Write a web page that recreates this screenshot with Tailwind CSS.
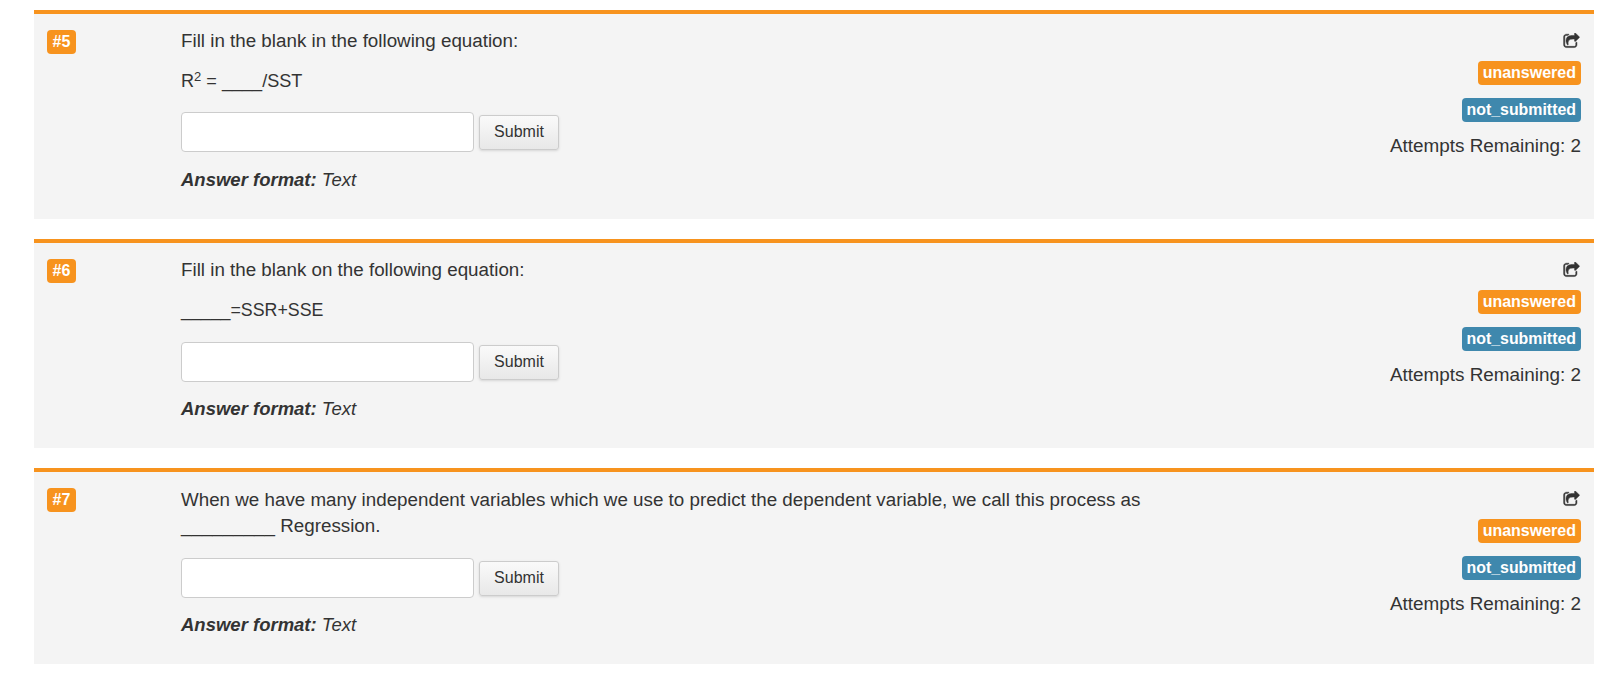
<!DOCTYPE html>
<html lang="en">
<head>
<meta charset="UTF-8">
<title>Questions</title>
<script src="https://cdn.jsdelivr.net/npm/@tailwindcss/browser@4"></script>
</head>
<body class="bg-white font-['Liberation_Sans',Arial,sans-serif] text-[18.8px] text-[#333]">
<div class="pl-[34px] pr-[22px] pt-[10px]">

  <!-- question 5 -->
  <div class="flex h-[209px] border-t-4 border-[#f7931e] bg-[#f4f4f4] mb-[20px]">
    <div class="flex w-[147px] shrink-0 items-start pl-[13px] pt-[16px]">
      <span class="flex h-[24px] w-[29px] items-center justify-center rounded-[4px] bg-[#f7931e] text-[16px] font-bold text-white">#5</span>
    </div>
    <div class="flex-1 pt-[15px]">
      <p class="leading-[24px]">Fill in the blank in the following equation:</p>
      <p class="mt-[16px] text-[18.1px] leading-[24px]">R<sup class="text-[13px] leading-none">2</sup> = ____/SST</p>
      <div class="mt-[19px] flex items-center gap-[5px]">
        <input type="text" class="h-[40px] w-[293px] rounded-[4px] border border-[#ccc] bg-white">
        <button class="h-[35px] w-[80px] rounded-[3px] border border-[#ccc] bg-gradient-to-b from-[#fafafa] to-[#e8e8e8] text-[16px] text-[#333] shadow-sm">Submit</button>
      </div>
      <p class="mt-[16px] text-[18.5px] italic leading-[24px]"><b>Answer format:</b> Text</p>
    </div>
    <div class="flex flex-col items-end pr-[13px] pt-[19px]">
      <svg class="mr-[1px] h-[17px] w-[17px] fill-[#333] stroke-[#333] stroke-[50]" viewBox="0 0 1792 1792"><path d="M1472 989v259q0 119-84.5 203.5t-203.5 84.5h-832q-119 0-203.5-84.5t-84.5-203.5v-832q0-119 84.5-203.5t203.5-84.5h255q13 0 22.5 9.5t9.5 22.5q0 27-26 32-77 26-133 60-10 4-16 4h-112q-66 0-113 47t-47 113v832q0 66 47 113t113 47h832q66 0 113-47t47-113v-214q0-19 18-29 28-13 54-37 16-16 35-8 21 9 21 29zm237-496l-384 384q-18 19-45 19-12 0-25-5-39-17-39-59v-192h-160q-323 0-438 131-119 137-74 473 3 23-20 34-8 2-12 2-16 0-26-13-10-14-21-31t-39.5-68.5-49.5-99.5-38.5-114-17.5-122q0-49 3.5-91t14-90 28-88 47-81.5 68.5-74 94.5-61.5 124.5-48.5 159.5-30.5 196.5-11h160v-192q0-42 39-59 13-5 25-5 26 0 45 19l384 384q19 19 19 45t-19 45z"/></svg>
      <span class="mt-[11px] flex h-[24px] items-center rounded-[4px] bg-[#f7931e] px-[5px] text-[16px] font-bold text-white">unanswered</span>
      <span class="mt-[13px] flex h-[24px] items-center rounded-[4px] bg-[#3f88ad] px-[5px] text-[15.9px] font-bold text-white">not_submitted</span>
      <p class="mt-[12px] text-[18.9px] leading-[24px]">Attempts Remaining: 2</p>
    </div>
  </div>

  <!-- question 6 -->
  <div class="flex h-[209px] border-t-4 border-[#f7931e] bg-[#f4f4f4] mb-[20px]">
    <div class="flex w-[147px] shrink-0 items-start pl-[13px] pt-[16px]">
      <span class="flex h-[24px] w-[29px] items-center justify-center rounded-[4px] bg-[#f7931e] text-[16px] font-bold text-white">#6</span>
    </div>
    <div class="flex-1 pt-[15px]">
      <p class="leading-[24px]">Fill in the blank on the following equation:</p>
      <p class="mt-[16px] text-[17.8px] leading-[24px]">_____=SSR+SSE</p>
      <div class="mt-[20px] flex items-center gap-[5px]">
        <input type="text" class="h-[40px] w-[293px] rounded-[4px] border border-[#ccc] bg-white">
        <button class="h-[35px] w-[80px] rounded-[3px] border border-[#ccc] bg-gradient-to-b from-[#fafafa] to-[#e8e8e8] text-[16px] text-[#333] shadow-sm">Submit</button>
      </div>
      <p class="mt-[15px] text-[18.5px] italic leading-[24px]"><b>Answer format:</b> Text</p>
    </div>
    <div class="flex flex-col items-end pr-[13px] pt-[19px]">
      <svg class="mr-[1px] h-[17px] w-[17px] fill-[#333] stroke-[#333] stroke-[50]" viewBox="0 0 1792 1792"><path d="M1472 989v259q0 119-84.5 203.5t-203.5 84.5h-832q-119 0-203.5-84.5t-84.5-203.5v-832q0-119 84.5-203.5t203.5-84.5h255q13 0 22.5 9.5t9.5 22.5q0 27-26 32-77 26-133 60-10 4-16 4h-112q-66 0-113 47t-47 113v832q0 66 47 113t113 47h832q66 0 113-47t47-113v-214q0-19 18-29 28-13 54-37 16-16 35-8 21 9 21 29zm237-496l-384 384q-18 19-45 19-12 0-25-5-39-17-39-59v-192h-160q-323 0-438 131-119 137-74 473 3 23-20 34-8 2-12 2-16 0-26-13-10-14-21-31t-39.5-68.5-49.5-99.5-38.5-114-17.5-122q0-49 3.5-91t14-90 28-88 47-81.5 68.5-74 94.5-61.5 124.5-48.5 159.5-30.5 196.5-11h160v-192q0-42 39-59 13-5 25-5 26 0 45 19l384 384q19 19 19 45t-19 45z"/></svg>
      <span class="mt-[11px] flex h-[24px] items-center rounded-[4px] bg-[#f7931e] px-[5px] text-[16px] font-bold text-white">unanswered</span>
      <span class="mt-[13px] flex h-[24px] items-center rounded-[4px] bg-[#3f88ad] px-[5px] text-[15.9px] font-bold text-white">not_submitted</span>
      <p class="mt-[12px] text-[18.9px] leading-[24px]">Attempts Remaining: 2</p>
    </div>
  </div>

  <!-- question 7 -->
  <div class="flex h-[196px] border-t-4 border-[#f7931e] bg-[#f4f4f4]">
    <div class="flex w-[147px] shrink-0 items-start pl-[13px] pt-[16px]">
      <span class="flex h-[24px] w-[29px] items-center justify-center rounded-[4px] bg-[#f7931e] text-[16px] font-bold text-white">#7</span>
    </div>
    <div class="flex-1 pt-[15px]">
      <p class="max-w-[980px] leading-[26px]">When we have many independent variables which we use to predict the dependent variable, we call this process as _________ Regression.</p>
      <div class="mt-[19px] flex items-center gap-[5px]">
        <input type="text" class="h-[40px] w-[293px] rounded-[4px] border border-[#ccc] bg-white">
        <button class="h-[35px] w-[80px] rounded-[3px] border border-[#ccc] bg-gradient-to-b from-[#fafafa] to-[#e8e8e8] text-[16px] text-[#333] shadow-sm">Submit</button>
      </div>
      <p class="mt-[15px] text-[18.5px] italic leading-[24px]"><b>Answer format:</b> Text</p>
    </div>
    <div class="flex flex-col items-end pr-[13px] pt-[19px]">
      <svg class="mr-[1px] h-[17px] w-[17px] fill-[#333] stroke-[#333] stroke-[50]" viewBox="0 0 1792 1792"><path d="M1472 989v259q0 119-84.5 203.5t-203.5 84.5h-832q-119 0-203.5-84.5t-84.5-203.5v-832q0-119 84.5-203.5t203.5-84.5h255q13 0 22.5 9.5t9.5 22.5q0 27-26 32-77 26-133 60-10 4-16 4h-112q-66 0-113 47t-47 113v832q0 66 47 113t113 47h832q66 0 113-47t47-113v-214q0-19 18-29 28-13 54-37 16-16 35-8 21 9 21 29zm237-496l-384 384q-18 19-45 19-12 0-25-5-39-17-39-59v-192h-160q-323 0-438 131-119 137-74 473 3 23-20 34-8 2-12 2-16 0-26-13-10-14-21-31t-39.5-68.5-49.5-99.5-38.5-114-17.5-122q0-49 3.5-91t14-90 28-88 47-81.5 68.5-74 94.5-61.5 124.5-48.5 159.5-30.5 196.5-11h160v-192q0-42 39-59 13-5 25-5 26 0 45 19l384 384q19 19 19 45t-19 45z"/></svg>
      <span class="mt-[11px] flex h-[24px] items-center rounded-[4px] bg-[#f7931e] px-[5px] text-[16px] font-bold text-white">unanswered</span>
      <span class="mt-[13px] flex h-[24px] items-center rounded-[4px] bg-[#3f88ad] px-[5px] text-[15.9px] font-bold text-white">not_submitted</span>
      <p class="mt-[12px] text-[18.9px] leading-[24px]">Attempts Remaining: 2</p>
    </div>
  </div>

</div>
</body>
</html>
